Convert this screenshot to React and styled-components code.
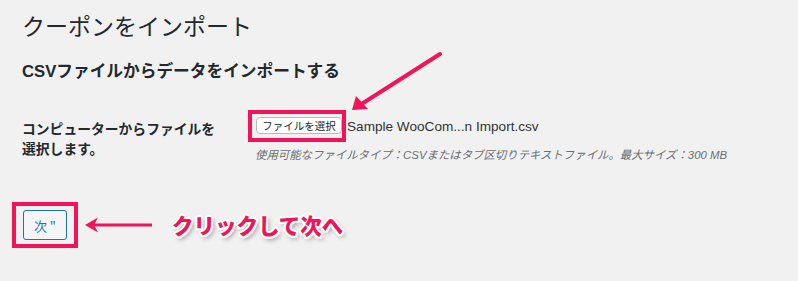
import React from "react";
import styled, { createGlobalStyle } from "styled-components";

const PINK = "#f0145a";

const GlobalStyle = createGlobalStyle`
  html, body {
    margin: 0;
    padding: 0;
    background: #f1f1f1;
  }
  body {
    font-family: "Liberation Sans", "Noto Sans CJK JP", sans-serif;
    color: #23282d;
  }
`;

const Page = styled.div`
  position: relative;
  width: 798px;
  height: 281px;
  box-sizing: border-box;
  padding: 10px 0 0 22px;
  background: #f1f1f1;
  overflow: hidden;
`;

const Title = styled.h1`
  margin: 0;
  font-family: "Noto Sans CJK JP", sans-serif;
  font-size: 23px;
  font-weight: 400;
  line-height: 30px;
  color: #23282d;
`;

const SubTitle = styled.h2`
  margin: 20px 0 0;
  font-family: "Liberation Sans", "Noto Sans CJK JP", sans-serif;
  font-size: 16.7px;
  font-weight: 700;
  line-height: 24px;
  color: #23282d;
`;

const FormRow = styled.div`
  display: flex;
  align-items: flex-start;
  margin-top: 26px;
`;

const Label = styled.div`
  width: 226px;
  padding-top: 8px;
  font-family: "Noto Sans CJK JP", sans-serif;
  font-size: 13.8px;
  font-weight: 700;
  line-height: 20px;
  color: #23282d;
`;

const Field = styled.div`
  display: flex;
  flex-direction: column;
`;

const FileLine = styled.div`
  display: flex;
  align-items: center;
`;

const Highlight = styled.div`
  display: flex;
  border: ${(p) => p.$thick}px solid ${PINK};
  padding: ${(p) => p.$pad};
`;

const FileButton = styled.button`
  width: 86px;
  height: 17px;
  padding: 0;
  box-sizing: border-box;
  background: #ffffff;
  border: 1px solid #b8b8b8;
  border-radius: 4px;
  font-family: "Noto Sans CJK JP", sans-serif;
  font-size: 10.5px;
  line-height: 15px;
  color: #222;
  cursor: pointer;
`;

const FileName = styled.span`
  margin-left: 1px;
  font-family: "Liberation Sans", sans-serif;
  font-size: 13.6px;
  color: #333;
`;

const Hint = styled.p`
  margin: 5px 0 0 7px;
  font-family: "Liberation Sans", "Noto Sans CJK JP", sans-serif;
  font-size: 11.4px;
  font-style: italic;
  line-height: 16px;
  color: #6b6e72;
`;

const SubmitRow = styled.div`
  display: flex;
  align-items: center;
  margin: 39px 0 0 -10px;
`;

const NextButton = styled.button`
  width: 44px;
  height: 30px;
  padding: 0;
  box-sizing: border-box;
  background: #f3f5f6;
  border: 1px solid #2271b1;
  border-radius: 3px;
  font-family: "Noto Sans CJK JP", sans-serif;
  font-size: 13px;
  color: #2271b1;
  cursor: pointer;
`;

const Callout = styled.span`
  margin-left: 18px;
  font-family: "Noto Sans CJK JP", sans-serif;
  font-size: 21.5px;
  font-weight: 900;
  line-height: 28px;
  color: ${PINK};
  text-shadow:
    2px 0 0 #fff, -2px 0 0 #fff, 0 2px 0 #fff, 0 -2px 0 #fff,
    1.5px 1.5px 0 #fff, -1.5px 1.5px 0 #fff, 1.5px -1.5px 0 #fff, -1.5px -1.5px 0 #fff,
    2px 3px 5px rgba(0, 0, 0, 0.45);
`;

const Overlay = styled.svg`
  position: absolute;
  left: 0;
  top: 0;
  pointer-events: none;
`;

const ArrowIcon = styled.svg`
  display: block;
  margin-left: 6px;
`;

export default function App() {
  return (
    <>
      <GlobalStyle />
      <Page>
        <Title>クーポンをインポート</Title>
        <SubTitle>CSVファイルからデータをインポートする</SubTitle>
        <FormRow>
          <Label>
            コンピューターからファイルを
            <br />
            選択します。
          </Label>
          <Field>
            <FileLine>
              <Highlight $thick={4} $pad="3px 0 4px 4px">
                <FileButton type="button">ファイルを選択</FileButton>
              </Highlight>
              <FileName>Sample WooCom...n Import.csv</FileName>
            </FileLine>
            <Hint>
              使用可能なファイルタイプ：CSVまたはタブ区切りテキストファイル。最大サイズ：300 MB
            </Hint>
          </Field>
        </FormRow>
        <SubmitRow>
          <Highlight $thick={4} $pad="4px 7px">
            <NextButton type="button">次 "</NextButton>
          </Highlight>
          <ArrowIcon width="70" height="20" viewBox="0 0 70 20">
            <line x1="68" y1="10" x2="10" y2="10" stroke={PINK} strokeWidth="3" />
            <polygon points="1,10 14,2.5 10,10 14,17.5" fill={PINK} />
          </ArrowIcon>
          <Callout>クリックして次へ</Callout>
        </SubmitRow>
        <Overlay width="798" height="281" viewBox="0 0 798 281">
          <line x1="440" y1="54" x2="360" y2="105" stroke={PINK} strokeWidth="4" strokeLinecap="round" />
          <polygon points="352,110 356,96 368,109" fill={PINK} />
        </Overlay>
      </Page>
    </>
  );
}
